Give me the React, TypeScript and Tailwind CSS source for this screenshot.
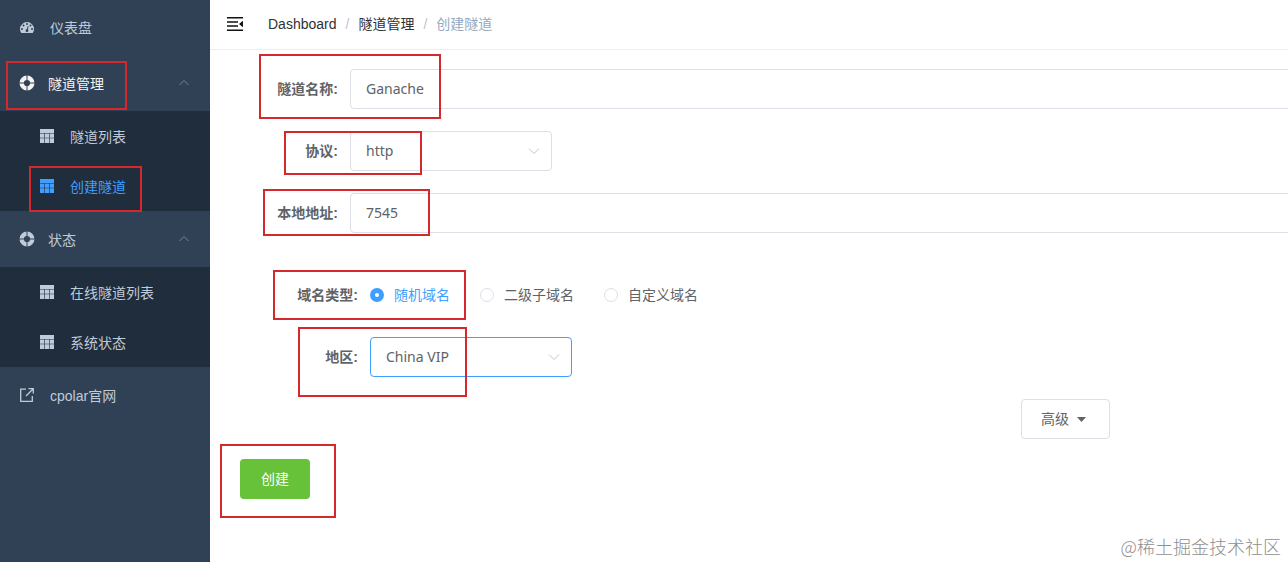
import type { ReactNode } from "react";

const CJK = "font-['Liberation_Sans','Noto_Sans_CJK_SC',sans-serif]";
const HUMANIST = "font-['Noto_Sans','Noto_Sans_CJK_SC',sans-serif]";

function GaugeIcon() {
  return (
    <svg width="14" height="14" viewBox="0 0 128 128" aria-hidden="true">
      <path
        fill="currentColor"
        d="M128 74c0 12.400-3.400 24-10.100 34.300-.900 1.400-2.200 2.100-3.900 2.100H14c-1.700 0-3-.700-3.900-2.100C3.400 98 0 86.400 0 74a64 64 0 0 1 128 0z"
      />
      <g fill="#304156">
        <circle cx="18" cy="74" r="9" />
        <circle cx="32" cy="42" r="9" />
        <circle cx="64" cy="28" r="9" />
        <circle cx="96" cy="42" r="9" />
        <circle cx="110" cy="74" r="9" />
        <circle cx="64" cy="88" r="13" />
        <path d="M60 82 71 46l8 2-9 38z" />
      </g>
    </svg>
  );
}

function RingIcon() {
  return (
    <svg width="16" height="16" viewBox="0 0 16 16" aria-hidden="true">
      <circle cx="8" cy="8" r="5.300" fill="none" stroke="currentColor" strokeWidth="4.400" />
      <path d="M8 0v5M8 11v5M0 8h5M11 8h5" stroke="#304156" strokeWidth="1" />
    </svg>
  );
}

function TableIcon() {
  return (
    <svg width="14" height="14" viewBox="0 0 14 14" fill="currentColor" aria-hidden="true">
      <path d="M0 0h14v4H0zM0 4.500h4.400v4.300H0zM5 4.500h4v4.300H5zM9.600 4.500H14v4.300H9.600zM0 9.200h4.400V14H0zM5 9.200h4V14H5zM9.600 9.200H14V14H9.600z" />
    </svg>
  );
}

function LinkIcon() {
  return (
    <svg width="14" height="14" viewBox="0 0 14 14" fill="none" stroke="currentColor" strokeWidth="1.300" aria-hidden="true">
      <path d="M6 1.200H.7v12.100h11.600V8" />
      <path d="M8.500.7h4.800v4.800M13 1 6 8" />
    </svg>
  );
}

function Chevron({ up = false }: { up?: boolean }) {
  return (
    <svg width="12" height="8" viewBox="0 0 12 8" fill="none" stroke="currentColor" aria-hidden="true">
      <path d={up ? "M1.500 6 6 1.500 10.500 6" : "M1 1.500 6 6.500l5-5"} />
    </svg>
  );
}

function SubMenu({ title, active = false, items }: { title: string; active?: boolean; items: { label: string; active?: boolean }[] }) {
  return (
    <li>
      <button className={active ? "flex h-14 w-full items-center pl-[19px] pr-5 text-[#f4f4f5]" : "flex h-14 w-full items-center pl-[19px] pr-5"}>
        <RingIcon />
        <span className="ml-[13px] flex-1 pt-0.5 text-left">{title}</span>
        <span className="text-[#73839a]"><Chevron up /></span>
      </button>
      <ul className="bg-[#1f2d3d]">
        {items.map((item) => (
          <li key={item.label}>
            <a href="#" className={item.active ? "flex h-[50px] items-center gap-4 pl-10 text-[#409eff]" : "flex h-[50px] items-center gap-4 pl-10"}>
              <TableIcon />
              <span className="pt-0.5">{item.label}</span>
            </a>
          </li>
        ))}
      </ul>
    </li>
  );
}

function Sidebar() {
  return (
    <nav className="w-[210px] shrink-0 bg-[#304156] text-[#bfcbd9]">
      <ul>
        <li>
          <a href="#" className="flex h-[55px] items-center gap-4 pl-5">
            <GaugeIcon />
            仪表盘
          </a>
        </li>
        <SubMenu title="隧道管理" active items={[{ label: "隧道列表" }, { label: "创建隧道", active: true }]} />
        <SubMenu title="状态" items={[{ label: "在线隧道列表" }, { label: "系统状态" }]} />
        <li>
          <a href="#" className="flex h-14 items-center gap-4 pl-5">
            <LinkIcon />
            <span className="pt-0.5">cpolar官网</span>
          </a>
        </li>
      </ul>
    </nav>
  );
}

function Header() {
  return (
    <header className="flex h-[50px] items-center border-b border-[#ebeef2] pb-0.5">
      <button aria-label="toggle sidebar" className="ml-4 mr-6 text-[#111]">
        <svg width="18" height="18" viewBox="0 0 18 18" fill="currentColor" aria-hidden="true">
          <path d="M1 2h16v1.500H1zM1 6.300h11v1.500H1zM1 10.300h11v1.500H1zM1 14.500h16V16H1zM17 5.800v6.400L13 9z" />
        </svg>
      </button>
      <nav className="flex gap-[9px] text-[#303133]">
        <a href="#">Dashboard</a>
        <span className="text-[#c0c4cc]">/</span>
        <a href="#">隧道管理</a>
        <span className="text-[#c0c4cc]">/</span>
        <span className="text-[#97a8be]">创建隧道</span>
      </nav>
    </header>
  );
}

function Field({ label, htmlFor, nested = false, children }: { label: string; htmlFor: string; nested?: boolean; children: ReactNode }) {
  return (
    <div className="flex h-10 items-center">
      <label htmlFor={htmlFor} className={nested ? "w-40 shrink-0 pr-3 text-right font-bold" : "w-[140px] shrink-0 pr-3 text-right font-bold"}>
        {label}
      </label>
      {children}
    </div>
  );
}

function TextInput({ id, value }: { id: string; value: string }) {
  return (
    <input
      id={id}
      defaultValue={value}
      className={`${HUMANIST} -mr-2 h-10 min-w-0 flex-1 rounded border border-[#dcdfe6] px-[15px] pb-0.5 outline-none`}
    />
  );
}

function Select({ id, value, focused = false }: { id: string; value: string; focused?: boolean }) {
  return (
    <div className="relative w-[202px]">
      <select
        id={id}
        defaultValue={value}
        className={
          focused
            ? `${HUMANIST} h-10 w-full appearance-none rounded border border-[#409eff] bg-white px-[15px] outline-none`
            : `${HUMANIST} h-10 w-full appearance-none rounded border border-[#dcdfe6] bg-white px-[15px] outline-none`
        }
      >
        <option>{value}</option>
      </select>
      <span className="pointer-events-none absolute inset-y-0 right-3 flex items-center text-[#c0c4cc]">
        <Chevron />
      </span>
    </div>
  );
}

const domainTypes = ["随机域名", "二级子域名", "自定义域名"];

// Red frames laid over the steps a reader has to follow
const marks = [
  "left-[6px] top-[61px] w-[121px] h-[49px]",
  "left-[29px] top-[166px] w-[113px] h-[46px]",
  "left-[259px] top-[54px] w-[182px] h-[65px]",
  "left-[284px] top-[131px] w-[138px] h-[44px]",
  "left-[263px] top-[189px] w-[167px] h-[47px]",
  "left-[273px] top-[270px] w-[193px] h-[50px]",
  "left-[298px] top-[327px] w-[169px] h-[70px]",
  "left-[220px] top-[444px] w-[116px] h-[74px]",
];

export default function App() {
  return (
    <div className={`${CJK} relative flex min-h-screen overflow-hidden bg-white text-sm text-[#606266]`}>
      <Sidebar />

      <main className="min-w-0 flex-1">
        <Header />

        <form className="pt-[19px]">
          <div className="flex flex-col gap-[22px]">
            <Field label="隧道名称:" htmlFor="name">
              <TextInput id="name" value="Ganache" />
            </Field>
            <Field label="协议:" htmlFor="protocol">
              <Select id="protocol" value="http" />
            </Field>
            <Field label="本地地址:" htmlFor="addr">
              <TextInput id="addr" value="7545" />
            </Field>
          </div>

          <div className="mt-[42px] flex flex-col gap-[22px]">
            <Field label="域名类型:" htmlFor="domain-0" nested>
              <div className="flex gap-[30px]">
                {domainTypes.map((type, i) => (
                  <label key={type} className="flex items-center gap-[10px] has-checked:text-[#409eff]">
                    <input
                      id={`domain-${i}`}
                      type="radio"
                      name="domain"
                      defaultChecked={i === 0}
                      className="size-[14px] appearance-none rounded-full border border-[#dcdfe6] bg-white checked:border-[5px] checked:border-[#409eff]"
                    />
                    {type}
                  </label>
                ))}
              </div>
            </Field>
            <Field label="地区:" htmlFor="region" nested>
              <Select id="region" value="China VIP" focused />
            </Field>
            <div className="flex justify-end pr-[178px]">
              <button type="button" className="flex h-10 items-center gap-2 rounded border border-[#dcdfe6] pl-[19px] pr-[23px]">
                高级
                <svg width="9" height="5" viewBox="0 0 9 5" fill="currentColor" aria-hidden="true">
                  <path d="M0 0h9L4.500 5z" />
                </svg>
              </button>
            </div>
          </div>

          <button type="button" className="ml-[30px] mt-5 h-10 w-[70px] rounded bg-[#67c23a] text-white">
            创建
          </button>
        </form>
      </main>

      {marks.map((mark) => (
        <div key={mark} className={`pointer-events-none absolute border-2 border-[#d4282d] ${mark}`} />
      ))}
      <div className="pointer-events-none absolute bottom-0.5 right-[7px] font-['Noto_Sans_CJK_SC',sans-serif] text-lg font-light text-[#8f8f8f]">
        @稀土掘金技术社区
      </div>
    </div>
  );
}
